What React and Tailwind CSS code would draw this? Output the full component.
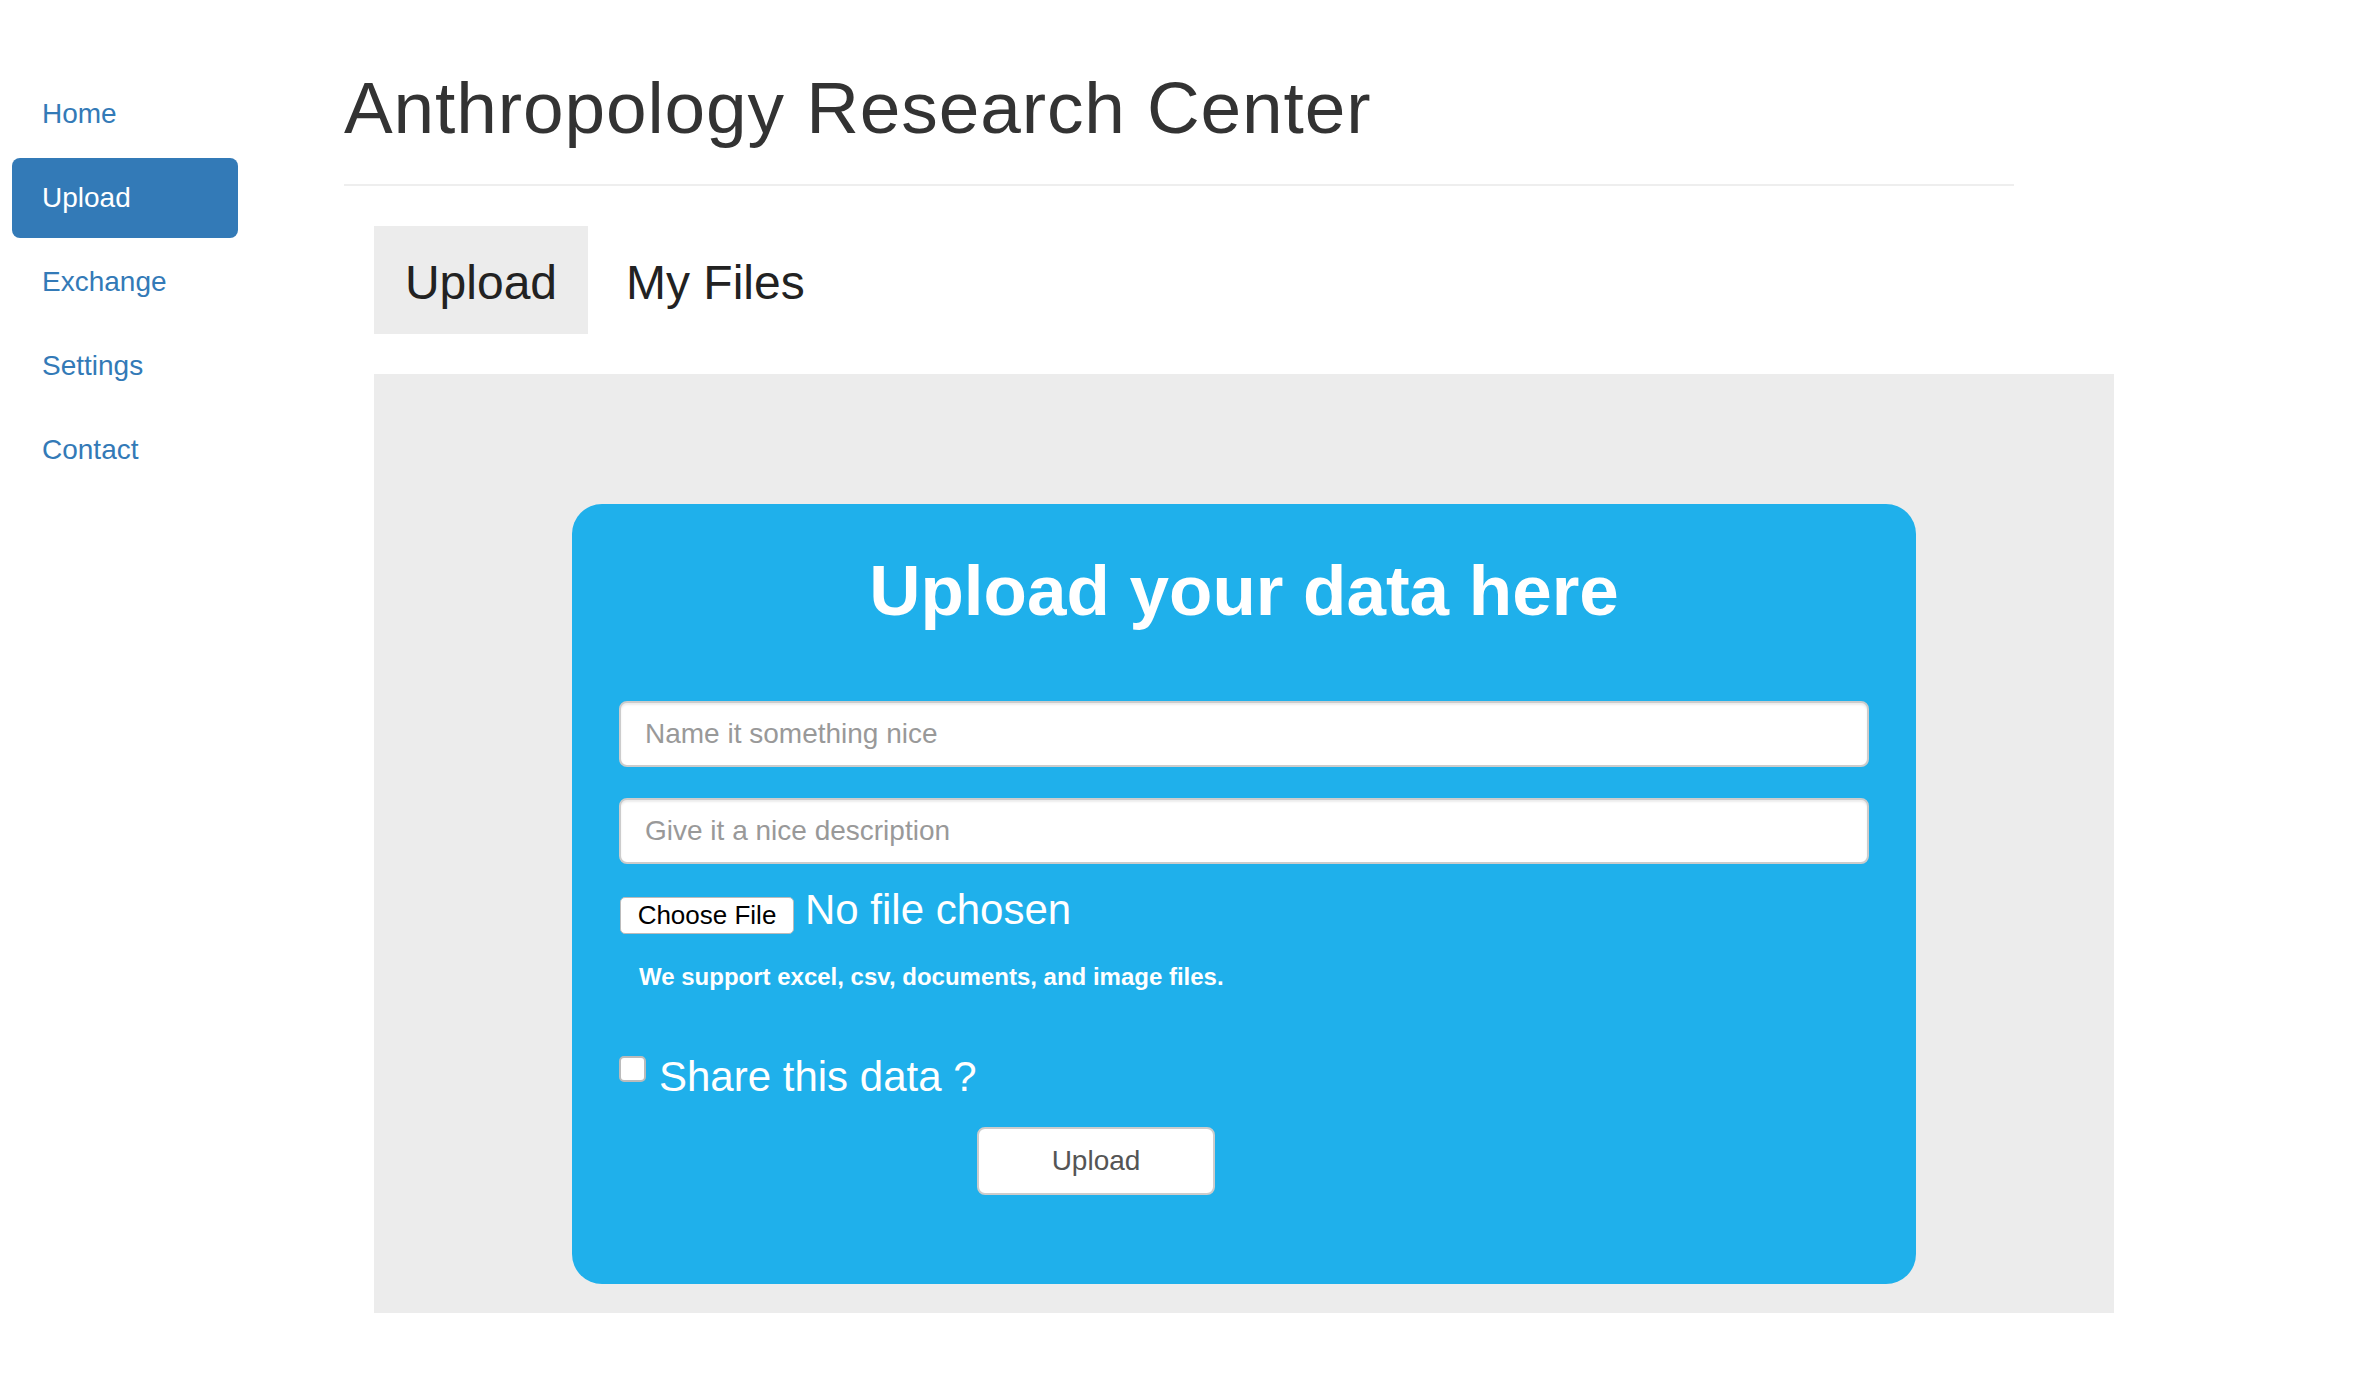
import React, { useState } from 'react';

const navItems = ['Home', 'Upload', 'Exchange', 'Settings', 'Contact'];

const App = () => {
  const [activeNav] = useState('Upload');
  const [activeTab, setActiveTab] = useState('upload');
  const [shared, setShared] = useState(false);

  return (
    <div className="min-h-screen bg-white flex font-['Liberation_Sans',Arial,sans-serif]">
      {/* Sidebar */}
      <aside className="w-[226px] ml-[12px] pt-[74px] shrink-0">
        <nav className="flex flex-col gap-[4px]">
          {navItems.map((item) => (
            <a
              key={item}
              href="#"
              className={`block h-[80px] leading-[80px] pl-[30px] rounded-[8px] text-[28px] ${
                activeNav === item ? 'bg-[#337ab7] text-white' : 'text-[#337ab7]'
              }`}
            >
              {item}
            </a>
          ))}
        </nav>
      </aside>

      {/* Main */}
      <main className="ml-[106px] flex-1">
        <div className="w-[1670px] border-b-2 border-[#eee] pb-[36px]">
          <h1 className="mt-[68px] text-[73px] leading-[1.1] tracking-[0.9px] text-[#333]">
            Anthropology Research Center
          </h1>
        </div>

        <div className="pl-[30px]">
          {/* Tabs */}
          <div className="mt-[40px] flex gap-[9px]">
            <button
              onClick={() => setActiveTab('upload')}
              className={`h-[108px] w-[214px] pt-[5px] text-[48px] text-[#222] ${
                activeTab === 'upload' ? 'bg-[#ececec]' : ''
              }`}
            >
              Upload
            </button>
            <button
              onClick={() => setActiveTab('files')}
              className={`h-[108px] px-[29px] pt-[5px] text-[48px] text-[#222] ${
                activeTab === 'files' ? 'bg-[#ececec]' : ''
              }`}
            >
              My Files
            </button>
          </div>

          {/* Panel */}
          <div className="mt-[40px] w-[1740px] bg-[#ececec] pt-[130px] pb-[29px] pl-[198px]">
            <div className="w-[1344px] h-[780px] bg-[#1fb0eb] rounded-[30px] px-[47px] pt-[48px]">
              <h2 className="text-center text-white font-bold text-[71px] leading-[1.1]">
                Upload your data here
              </h2>

              <input
                type="text"
                placeholder="Name it something nice"
                className="mt-[71px] block w-full h-[66px] bg-white border-2 border-[#ccc] rounded-[8px] pl-[24px] text-[28px] text-[#555] placeholder:text-[#999] shadow-[inset_0_2px_2px_rgba(0,0,0,0.075)] outline-none"
              />
              <input
                type="text"
                placeholder="Give it a nice description"
                className="mt-[31px] block w-full h-[66px] bg-white border-2 border-[#ccc] rounded-[8px] pl-[24px] text-[28px] text-[#555] placeholder:text-[#999] shadow-[inset_0_2px_2px_rgba(0,0,0,0.075)] outline-none"
              />

              {/* File chooser */}
              <div className="mt-[22px] flex items-baseline">
                <button className="h-[37px] w-[174px] ml-[1px] bg-white border border-[#bbb] rounded-[5px] text-[26px] leading-[30px] text-black">
                  Choose File
                </button>
                <span className="ml-[11px] text-[42px] leading-[48px] text-white">No file chosen</span>
              </div>

              <p className="mt-[26px] ml-[20px] text-[24px] leading-[34px] font-bold text-white">
                We support excel, csv, documents, and image files.
              </p>

              {/* Share */}
              <label className="mt-[59px] flex items-start cursor-pointer">
                <span
                  onClick={() => setShared(!shared)}
                  className="mt-[3px] w-[27px] h-[26px] bg-white border-2 border-[#bbb] rounded-[5px] flex items-center justify-center text-[#337ab7] text-[20px]"
                >
                  {shared ? '✓' : ''}
                </span>
                <span className="ml-[13px] text-[42px] leading-[48px] text-white">Share this data ?</span>
              </label>

              <button className="mt-[26px] ml-[358px] w-[238px] h-[68px] bg-white border-2 border-[#ccc] rounded-[8px] text-[28px] text-[#555]">
                Upload
              </button>
            </div>
          </div>
        </div>
      </main>
    </div>
  );
};

export default App;
